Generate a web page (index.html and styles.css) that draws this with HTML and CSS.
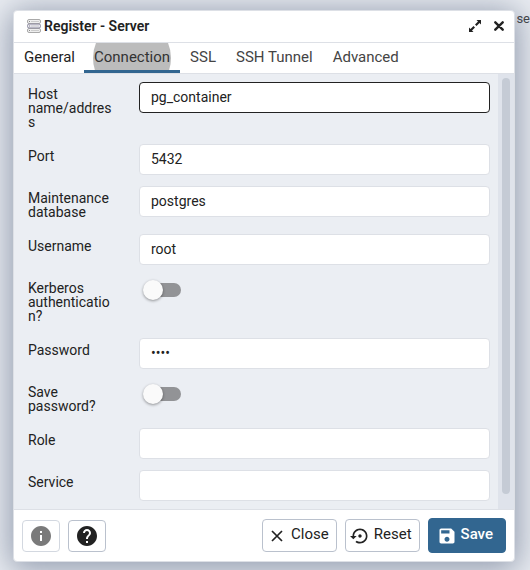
FILE: index.html
```html
<!DOCTYPE html>
<html lang="en">
<head>
<meta charset="utf-8">
<title>Register - Server</title>
<link rel="stylesheet" href="styles.css">
</head>
<body>
<span class="backdrop-text">se</span>
<main class="dialog" role="dialog" aria-labelledby="dialog-title">
  <header class="titlebar">
    <svg class="server-icon" viewBox="0 0 14 14" aria-hidden="true">
      <g fill="#eeeeee" stroke="#a9a9a9">
        <rect x="0.5" y="0.5" width="13" height="4" rx="1.5"/>
        <rect x="0.5" y="9.5" width="13" height="4" rx="1.5"/>
      </g>
      <rect x="0.5" y="5" width="13" height="4" rx="1.5" fill="#e6e5ee" stroke="#8d8b9e"/>
      <path d="M2 2.5h1M2 7h1M2 11.5h1" stroke="#888"/>
      <path d="M4 2.5h8M4 7h8M4 11.5h8" stroke="#ccc"/>
    </svg>
    <h1 id="dialog-title">Register - Server</h1>
    <button class="icon-button" type="button" aria-label="Maximize">
      <svg viewBox="0 0 14 14" width="14" height="14"><path d="M8.500 1H13v4.500l-1.500-1.500-3 3L7 5.500l3-3zM5.500 13H1V8.500L2.500 10l3-3L7 8.500l-3 3z" fill="#222"/></svg>
    </button>
    <button class="icon-button" type="button" aria-label="Close dialog">
      <svg viewBox="0 0 10 10" width="10" height="10"><path d="M1.300 1.300l7.400 7.400M8.700 1.300L1.300 8.700" stroke="#222" stroke-width="2.400" stroke-linecap="round"/></svg>
    </button>
  </header>
  <nav class="tabs" role="tablist">
    <button class="tab tab-visited" type="button" role="tab">General</button>
    <button class="tab tab-active" type="button" role="tab" aria-selected="true"><span>Connection</span></button>
    <button class="tab" type="button" role="tab">SSL</button>
    <button class="tab" type="button" role="tab">SSH Tunnel</button>
    <button class="tab" type="button" role="tab">Advanced</button>
  </nav>
  <div class="body">
    <form class="form" id="server-form">
      <div class="row"><label for="host">Host name/address</label><input class="field field-focus" id="host" type="text" value="pg_container"></div>
      <div class="row"><label for="port">Port</label><input class="field" id="port" type="text" value="5432"></div>
      <div class="row"><label for="db">Maintenance database</label><input class="field" id="db" type="text" value="postgres"></div>
      <div class="row"><label for="user">Username</label><input class="field" id="user" type="text" value="root"></div>
      <div class="row"><label for="kerberos">Kerberos authentication?</label><input class="switch" id="kerberos" type="checkbox" role="switch"></div>
      <div class="row"><label for="password">Password</label><input class="field" id="password" type="password" value="root"></div>
      <div class="row"><label for="save-password">Save password?</label><input class="switch" id="save-password" type="checkbox" role="switch"></div>
      <div class="row"><label for="role">Role</label><input class="field" id="role" type="text"></div>
      <div class="row"><label for="service">Service</label><input class="field" id="service" type="text"></div>
    </form>
    <div class="scroll-track"><div class="scroll-thumb"></div></div>
  </div>
  <footer class="footer">
    <button class="button button-icon" type="button" aria-label="Information" disabled>
      <svg viewBox="2 2 20 20" width="20" height="20"><path d="M12 2C6.480 2 2 6.480 2 12s4.480 10 10 10 10-4.480 10-10S17.520 2 12 2zm1 15h-2v-6h2v6zm0-8h-2V7h2v2z" fill="#7a7a7a"/></svg>
    </button>
    <button class="button button-icon" type="button" aria-label="Help">
      <svg viewBox="2 2 20 20" width="20" height="20"><path d="M12 2C6.480 2 2 6.480 2 12s4.480 10 10 10 10-4.480 10-10S17.520 2 12 2zm1 17h-2v-2h2v2zm2.070-7.750l-.9.920C13.450 12.900 13 13.500 13 15h-2v-.5c0-1.100.45-2.100 1.170-2.830l1.240-1.260c.37-.36.59-.86.59-1.410 0-1.100-.9-2-2-2s-2 .9-2 2H8c0-2.210 1.790-4 4-4s4 1.790 4 4c0 .88-.36 1.680-.93 2.250z" fill="#222"/></svg>
    </button>
    <span class="spacer"></span>
    <button class="button" type="button">
      <svg viewBox="0 0 20 20" width="20" height="20"><path d="M5 5l10 10M15 5L5 15" stroke="#222" stroke-width="1.700"/></svg><span>Close</span>
    </button>
    <button class="button" type="reset" form="server-form">
      <svg viewBox="0 0 24 24" width="20" height="20"><path d="M14 12c0-1.100-.9-2-2-2s-2 .9-2 2 .9 2 2 2 2-.9 2-2zm-2-9c-4.970 0-9 4.030-9 9H0l4 4 4-4H5c0-3.870 3.130-7 7-7s7 3.130 7 7-3.130 7-7 7c-1.510 0-2.910-.49-4.060-1.300l-1.420 1.440C8.040 20.300 9.940 21 12 21c4.970 0 9-4.030 9-9s-4.030-9-9-9z" fill="#222"/></svg><span>Reset</span>
    </button>
    <button class="button button-primary" type="button">
      <svg viewBox="0 0 24 24" width="20" height="20"><path d="M17 3H5c-1.110 0-2 .9-2 2v14c0 1.100.89 2 2 2h14c1.100 0 2-.9 2-2V7l-4-4zm-5 16c-1.660 0-3-1.340-3-3s1.340-3 3-3 3 1.340 3 3-1.340 3-3 3zm3-10H5V5h10v4z" fill="#fff"/></svg><span>Save</span>
    </button>
  </footer>
</main>
</body>
</html>
```
FILE: styles.css
```css
* { box-sizing: border-box; }

body {
  margin: 0;
  min-height: 100vh;
  padding: 10px 15px 8px 13px;
  overflow: hidden;
  background: #ebeef3;
  color: #222;
  font: 14px/14px Roboto, "Liberation Sans", sans-serif;
}

button, input { font: inherit; color: inherit; }
button { border: 0; padding: 0; background: none; }
svg { display: block; flex: none; }

.backdrop-text {
  position: absolute;
  right: 0;
  top: 12px;
  color: #444;
  font-size: 13px;
}

.dialog {
  position: relative;
  display: flex;
  flex-direction: column;
  min-height: calc(100vh - 18px);
  border: 1px solid #dde0e6;
  border-radius: 4px;
  background: #fff;
  box-shadow: 0 4px 32px 4px rgba(60, 76, 108, 0.5);
}

.titlebar {
  display: flex;
  align-items: center;
  height: 32px;
  padding: 0 5px 2px 13px;
  gap: 3px;
  border-bottom: 1px solid #dde0e6;
}
.server-icon { width: 14px; height: 14px; }
.titlebar h1 { flex: 1; margin: 0; font-size: 14px; font-weight: 600; }
.icon-button { display: grid; place-items: center; width: 21px; height: 24px; }

.tabs { display: flex; height: 31px; border-bottom: 1px solid #dde0e6; }
.tab { position: relative; overflow: hidden; padding: 0 10px 2px; font-size: 15px; color: #444; }
.tab-visited { padding-right: 9px; color: #222; }
.tab-active { border-bottom: 3px solid #326690; padding: 1px 10px 0; color: #333; }
.tab-active span { position: relative; }
.tab-active::before {
  content: "";
  position: absolute;
  left: 50%;
  top: 50%;
  width: 78px;
  height: 78px;
  margin: -38px 0 0 -39px;
  border-radius: 50%;
  background: #bcbcbc;
}

.body { flex: 1; display: flex; background: #ebeef3; }
.form {
  flex: 1;
  display: flex;
  flex-direction: column;
  gap: 10px;
  padding: 8px 8px 6px 14px;
}
.row {
  display: grid;
  grid-template-columns: 87px minmax(0, 1fr);
  column-gap: 24px;
  align-items: start;
  min-height: 32px;
}
.row label { padding: 5px 0; overflow-wrap: anywhere; }
.field {
  width: 100%;
  height: 31px;
  padding: 0 11px 2px;
  border: 1px solid #dde0e6;
  border-radius: 4px;
  background: #fff;
  outline: 0;
}
.field-focus { border-color: #222; }

.switch {
  appearance: none;
  position: relative;
  width: 34px;
  height: 14px;
  margin: 7px 8px;
  border-radius: 7px;
  background: #929396;
}
.switch::before {
  content: "";
  position: absolute;
  left: -4px;
  top: -3px;
  width: 20px;
  height: 20px;
  border-radius: 50%;
  background: #fafafa;
  box-shadow: 0 1px 3px rgba(0, 0, 0, 0.4);
}

.scroll-track { width: 16px; padding: 4px 4px 15px; background: #dfe3eb; }
.scroll-thumb { height: 100%; border-radius: 4px; background: #c5cbd5; }

.footer {
  display: flex;
  align-items: center;
  gap: 8px;
  padding: 8px;
  border-top: 1px solid #dde0e6;
}
.spacer { flex: 1; }
.button {
  display: flex;
  align-items: center;
  justify-content: center;
  gap: 4px;
  height: 33px;
  padding: 0 7px 0 4px;
  border: 1px solid #bac1cd;
  border-radius: 4px;
  background: #fff;
  font-size: 15px;
}
.button span { padding-bottom: 3px; }
.button-icon { width: 38px; height: 32px; padding: 0; }
.button-icon:disabled { border-color: #d3d8e0; }
.button-primary {
  height: 35px;
  padding: 0 12px 0 8px;
  border-color: #326690;
  background: #326690;
  color: #fff;
  font-weight: 500;
}
```
